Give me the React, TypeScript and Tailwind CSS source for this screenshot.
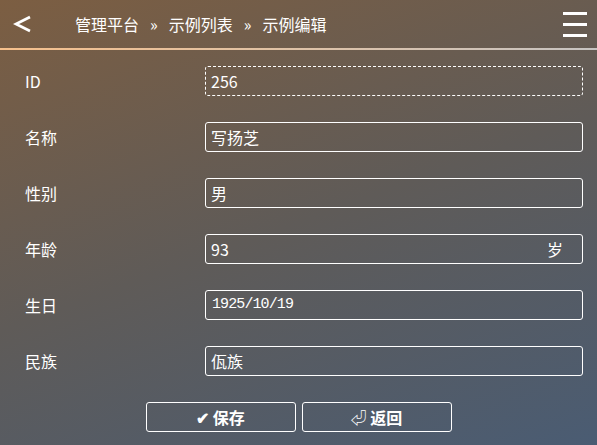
import React from "react";

const font = { fontFamily: '"Noto Sans CJK SC", "Noto Sans", sans-serif' };

function Row({ label, children }: { label: string; children: React.ReactNode }) {
  return (
    <div className="flex h-14 items-center">
      <div className="w-[205px] shrink-0 pl-[25px] text-[16px] text-white">{label}</div>
      <div className="flex-1 min-w-0 pr-[14px]">{children}</div>
    </div>
  );
}

export default function App() {
  return (
    <div
      className="w-[597px] h-[445px] overflow-hidden bg-[linear-gradient(160deg,#7c5e42_0%,#5f5b58_50%,#4a5c73_100%)] text-white"
      style={font}
    >
      <div className="flex h-12 items-center">
        <div className="w-[75px] shrink-0 pl-[13px] flex items-center">
          <svg width="20" height="20" viewBox="0 0 20 20">
            <polyline points="17,3 3,10 17,17" fill="none" stroke="white" strokeWidth="2.8" />
          </svg>
        </div>
        <div className="flex-1 text-[16px] leading-none">
          管理平台<span className="mx-[11px]">»</span>示例列表<span className="mx-[11px]">»</span>示例编辑
        </div>
        <div className="mr-[10px] flex flex-col gap-[8px]">
          <div className="h-[3px] w-[24px] bg-white" />
          <div className="h-[3px] w-[24px] bg-white" />
          <div className="h-[3px] w-[24px] bg-white" />
        </div>
      </div>
      <div className="h-[2px] bg-[linear-gradient(90deg,#f6c08c,#c7c4c2)]" />
      <div className="pt-[3px]">
        <Row label="ID">
          <div className="h-[30px] rounded-[3px] border border-dashed border-white px-[5px] flex items-center text-[16px]">256</div>
        </Row>
        <Row label="名称">
          <div className="h-[30px] rounded-[3px] border border-white px-[5px] flex items-center text-[16px]">写扬芝</div>
        </Row>
        <Row label="性别">
          <div className="h-[30px] rounded-[3px] border border-white px-[5px] flex items-center text-[16px]">男</div>
        </Row>
        <Row label="年龄">
          <div className="h-[30px] rounded-[3px] border border-white pl-[5px] pr-[19px] flex items-center justify-between text-[16px]">
            <span>93</span>
            <span>岁</span>
          </div>
        </Row>
        <Row label="生日">
          <div
            className="h-[30px] rounded-[3px] border border-white px-[6px] flex items-center text-[15px] tracking-[-0.9px]"
            style={{ fontFamily: '"Liberation Mono", monospace' }}
          >
            1925/10/19
          </div>
        </Row>
        <Row label="民族">
          <div className="h-[30px] rounded-[3px] border border-white px-[5px] flex items-center text-[16px]">佤族</div>
        </Row>
      </div>
      <div className="mt-[13px] flex justify-center gap-[6px]">
        <button className="h-[30px] w-[150px] rounded-[3px] border border-white flex items-center justify-center text-[16px] font-bold text-white">
          ✔ 保存
        </button>
        <button className="h-[30px] w-[150px] rounded-[3px] border border-white flex items-center justify-center text-[16px] font-bold text-white">
          ⏎ 返回
        </button>
      </div>
    </div>
  );
}
